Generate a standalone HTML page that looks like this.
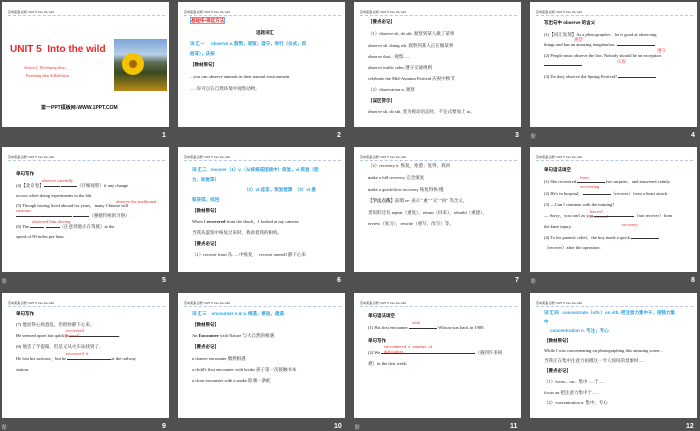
<!DOCTYPE html>
<html><head><meta charset="utf-8"><style>
*{margin:0;padding:0;box-sizing:border-box}
body{width:700px;height:431px;background:#505050;position:relative;overflow:hidden;font-family:"Liberation Serif","Noto Serif CJK SC",serif}
.s{position:absolute;width:167px;height:125px;background:#fff}
.h{position:absolute;left:6px;top:8px;font-size:3px;color:#333;font-family:"Liberation Sans","Noto Sans CJK SC",sans-serif;white-space:nowrap}
.d{position:absolute;left:6px;right:4px;top:13px;border-top:1px dashed #b8c8e0}
.t{position:absolute;font-size:4.5px;color:#222;white-space:nowrap;line-height:5px}
.b{font-weight:bold;font-family:"Liberation Sans","Noto Sans CJK SC",sans-serif;color:#111}
.c{color:#2aa0e0;font-weight:bold;font-family:"Liberation Sans","Noto Sans CJK SC",sans-serif}
.r{color:#e83030}
.n{position:absolute;color:#fff;font-size:7px;font-weight:bold;font-family:"Liberation Sans",sans-serif}
.m{position:absolute;color:#ddd;font-size:5px;font-family:"Noto Sans CJK SC",sans-serif}
.u{display:inline-block;border-bottom:0.6px solid #333;height:4px;vertical-align:baseline}
</style></head><body>

<!-- Slide 1 -->
<div class="s" style="left:2px;top:2px">
<div class="h">高中英语 必修 UNIT 5 Into the wild</div>
<div class="d"></div>
<div style="position:absolute;left:8px;top:42px;font:bold 10px 'Liberation Sans',sans-serif;color:#e82828;white-space:nowrap">UNIT 5&nbsp; Into the wild</div>
<div class="t r" style="left:22px;top:64px;font-size:3.6px">Section C&nbsp; Developing ideas ,</div>
<div class="t r" style="left:24px;top:72px;font-size:3.6px">Presenting ideas &amp; Reflection</div>
<div style="position:absolute;left:112px;top:37px;width:53px;height:52px;background:linear-gradient(#7aa4d8 0%,#b8cfe6 30%,#5d6e55 45%,#3a4a20 65%,#b88a18 100%)"><div style="position:absolute;left:8px;top:14px;width:22px;height:22px;border-radius:50%;background:#f5c400"></div><div style="position:absolute;left:15px;top:21px;width:8px;height:8px;border-radius:50%;background:#a06a00"></div></div>
<div class="t b" style="left:39px;top:104px;font-size:5px">第一PPT模板网-WWW.1PPT.COM</div>
</div>
<div class="n" style="left:162px;top:132px">1</div>

<!-- Slide 2 -->
<div class="s" style="left:178px;top:2px">
<div class="h">高中英语 必修 UNIT 5 Into the wild</div>
<div class="d"></div>
<div class="t c" style="left:12px;top:15px;color:#e02828;border:0.5px solid #6af;">基础练•梯度方法</div>
<div class="t b" style="left:78px;top:28px">话题词汇</div>
<div class="t c" style="left:12px;top:39px">词 汇一&nbsp;&nbsp;&nbsp;&nbsp; observe v. 群到，观察；遵守，举行（仪式，风</div>
<div class="t c" style="left:12px;top:49px">俗等），庆祝</div>
<div class="t b" style="left:12px;top:60px">【教材原句】</div>
<div class="t" style="left:12px;top:72px">...you can observe animals in their natural environment.</div>
<div class="t" style="left:12px;top:84px">......你可以在自然环境中观察动物。</div>
</div>
<div class="n" style="left:337px;top:132px">2</div>

<!-- Slide 3 -->
<div class="s" style="left:354px;top:2px">
<div class="h">高中英语 必修 UNIT 5 Into the wild</div>
<div class="d"></div>
<div class="t b" style="left:14px;top:17px">【要点必记】</div>
<div class="t" style="left:14px;top:29px">（1）observe sb. do sth. 观察到某人做了某事</div>
<div class="t" style="left:14px;top:41px">observe sb. doing sth. 观察到某人正在做某事</div>
<div class="t" style="left:14px;top:52px">observe that... 观察......</div>
<div class="t" style="left:14px;top:63px">observe traffic rules 遵守交通规则</div>
<div class="t" style="left:14px;top:74px">celebrate the Mid-Autumn Festival 庆祝中秋节</div>
<div class="t" style="left:14px;top:85px">（2）observation n. 观察</div>
<div class="t b" style="left:14px;top:96px">【误区警示】</div>
<div class="t" style="left:14px;top:107px">observe sb. do sth. 变为被动语态时，不定式要加上 to。</div>
</div>
<div class="n" style="left:515px;top:132px">3</div>
<div class="m" style="left:531px;top:133px">阶</div>

<!-- Slide 4 -->
<div class="s" style="left:530px;top:2px">
<div class="h">高中英语 必修 UNIT 5 Into the wild</div>
<div class="d"></div>
<div class="t b" style="left:14px;top:18px">写出句中 observe 的含义</div>
<div class="t" style="left:14px;top:30px">(1)【词汇复现】As a <i>photographer</i>，he is good at observing</div>
<div class="t" style="left:14px;top:40px">things and has an amazing <i>imagination</i>. <span class="u" style="width:38px"></span></div>
<div class="t r" style="left:44px;top:35px">观察</div>
<div class="t" style="left:14px;top:51px">(2) People must observe the law. Nobody should be an exception.</div>
<div class="t r" style="left:127px;top:46px">遵守</div>
<div class="t r" style="left:87px;top:57px">庆祝</div>
<div class="t" style="left:14px;top:60px"><span class="u" style="width:38px"></span></div>
<div class="t" style="left:14px;top:72px">(3) Do they observe the Spring Festival? <span class="u" style="width:38px"></span></div>
</div>
<div class="n" style="left:691px;top:132px">4</div>

<!-- Slide 5 -->
<div class="s" style="left:2px;top:147px">
<div class="h">高中英语 必修 UNIT 5 Into the wild</div>
<div class="d"></div>
<div class="t b" style="left:14px;top:24px">单句写作</div>
<div class="t" style="left:14px;top:36px">(4)【北京卷】<span class="u" style="width:16px"></span> <span class="u" style="width:16px"></span>（仔细观察）if any change</div>
<div class="t r" style="left:40px;top:31px">observe carefully</div>
<div class="t" style="left:14px;top:46px">occurs when doing experiments in the lab.</div>
<div class="t" style="left:14px;top:56px">(5) Though having lived abroad for years，many Chinese still</div>
<div class="t r" style="left:114px;top:52px">observe the traditional</div>
<div class="t r" style="left:14px;top:61px">customs</div>
<div class="t" style="left:14px;top:66px"><span class="u" style="width:56px"></span> <span class="u" style="width:16px"></span>（遵循传统的习俗）.</div>
<div class="t r" style="left:30px;top:72px">observed him driving</div>
<div class="t" style="left:14px;top:77px">(6) The <span class="u" style="width:14px"></span> <span class="u" style="width:14px"></span>（注意到他正在驾驶）at the</div>
<div class="t" style="left:14px;top:87px">speed of 90 miles per hour.</div>
</div>
<div class="n" style="left:162px;top:277px">5</div>
<div class="m" style="left:2px;top:278px">阶</div>

<!-- Slide 6 -->
<div class="s" style="left:178px;top:147px">
<div class="h">高中英语 必修 UNIT 5 Into the wild</div>
<div class="d"></div>
<div class="t c" style="left:14px;top:20px">词 汇二&nbsp;&nbsp; recover（1）v.（从疾病或困境中）恢复，vi.恢复（能</div>
<div class="t c" style="left:14px;top:30px">力、知觉等）</div>
<div class="t c" style="left:66px;top:40px">（2）vt.痊愈，恢复健康&nbsp;&nbsp;（3）vt.重</div>
<div class="t c" style="left:14px;top:50px">新获得，找回</div>
<div class="t b" style="left:14px;top:61px">【教材原句】</div>
<div class="t" style="left:14px;top:72px">When I <b>recovered</b> from the shock，I looked at my camera.</div>
<div class="t" style="left:14px;top:83px">当我从震惊中恢复过来时，我看着我的相机。</div>
<div class="t b" style="left:14px;top:94px">【要点必记】</div>
<div class="t" style="left:14px;top:105px">（1）recover from 从......中恢复&nbsp;&nbsp;&nbsp;&nbsp;&nbsp; recover oneself 静下心来</div>
</div>
<div class="n" style="left:337px;top:277px">6</div>

<!-- Slide 7 -->
<div class="s" style="left:354px;top:147px">
<div class="h">高中英语 必修 UNIT 5 Into the wild</div>
<div class="d"></div>
<div class="t" style="left:14px;top:16px">（2）recovery n. 恢复，痊愈；复得，找回</div>
<div class="t" style="left:14px;top:28px">make a full recovery 完全康复</div>
<div class="t" style="left:14px;top:40px">make a quick/slow recovery 恢复得快/慢</div>
<div class="t" style="left:14px;top:51px"><b>【学法点拨】</b>前缀 re- 表示 "重" "又" "再" 等含义。</div>
<div class="t" style="left:14px;top:63px">类似的还有 repeat（重复），return（回来），rebuild（重建），</div>
<div class="t" style="left:14px;top:74px">review（复习），rewrite（重写，改写）等。</div>
</div>
<div class="n" style="left:515px;top:277px">7</div>
<div class="m" style="left:531px;top:278px">阶</div>

<!-- Slide 8 -->
<div class="s" style="left:530px;top:147px">
<div class="h">高中英语 必修 UNIT 5 Into the wild</div>
<div class="d"></div>
<div class="t b" style="left:14px;top:20px">单句语法填空</div>
<div class="t" style="left:14px;top:32px">(1) She recovered <span class="u" style="width:28px"></span> her surprise，and answered calmly.</div>
<div class="t r" style="left:50px;top:28px">from</div>
<div class="t r" style="left:50px;top:37px">recovering</div>
<div class="t" style="left:14px;top:44px">(2) He's in hospital，<span class="u" style="width:28px"></span>（recover）from a heart attack.</div>
<div class="t" style="left:14px;top:55px">(3) —Can I continue with the training?</div>
<div class="t r" style="left:60px;top:62px">haven't<br>recovered</div>
<div class="t" style="left:14px;top:66px">— Sorry，you can't as you <span class="u" style="width:40px"></span>（not recover）from</div>
<div class="t r" style="left:92px;top:75px">recovery</div>
<div class="t" style="left:14px;top:77px">the knee injury.</div>
<div class="t" style="left:14px;top:88px">(4) To his parents' relief，the boy made a quick <span class="u" style="width:28px"></span></div>
<div class="t" style="left:14px;top:98px">（recover）after the operation.</div>
</div>
<div class="n" style="left:691px;top:277px">8</div>

<!-- Slide 9 -->
<div class="s" style="left:2px;top:293px">
<div class="h">高中英语 必修 UNIT 5 Into the wild</div>
<div class="d"></div>
<div class="t b" style="left:14px;top:18px">单句写作</div>
<div class="t" style="left:14px;top:29px">(7) 他显得心烦意乱，但很快静下心来。</div>
<div class="t" style="left:14px;top:40px">He seemed upset but quickly <span class="u" style="width:50px"></span>.</div>
<div class="t r" style="left:64px;top:35px">recovered<br>himself</div>
<div class="t" style="left:14px;top:51px">(8) 他丢了手提箱，但是又从火车站找到了。</div>
<div class="t r" style="left:64px;top:58px">recovered&nbsp; it</div>
<div class="t" style="left:14px;top:63px">He lost his suitcase，but he <span class="u" style="width:44px"></span>at the railway</div>
<div class="t" style="left:14px;top:74px">station.</div>
</div>
<div class="n" style="left:162px;top:423px">9</div>
<div class="m" style="left:2px;top:424px">阶</div>

<!-- Slide 10 -->
<div class="s" style="left:178px;top:293px">
<div class="h">高中英语 必修 UNIT 5 Into the wild</div>
<div class="d"></div>
<div class="t c" style="left:14px;top:18px">词 汇三&nbsp;&nbsp;&nbsp; encounter n.&amp; v. 相遇，邂逅，遭遇</div>
<div class="t b" style="left:14px;top:29px">【教材原句】</div>
<div class="t" style="left:14px;top:40px">An <b>Encounter</b> with Nature 与大自然的相遇</div>
<div class="t b" style="left:14px;top:51px">【要点必记】</div>
<div class="t" style="left:14px;top:63px">a chance encounter 偶然相遇</div>
<div class="t" style="left:14px;top:74px">a child's first encounter with books 孩子第一次接触书本</div>
<div class="t" style="left:14px;top:85px">a close encounter with a snake 险遇一条蛇</div>
</div>
<div class="n" style="left:334px;top:423px">10</div>

<!-- Slide 11 -->
<div class="s" style="left:354px;top:293px">
<div class="h">高中英语 必修 UNIT 5 Into the wild</div>
<div class="d"></div>
<div class="t b" style="left:14px;top:20px">单句语法填空</div>
<div class="t" style="left:14px;top:32px">(1) His first encounter <span class="u" style="width:28px"></span> Wilson was back in 1989.</div>
<div class="t r" style="left:58px;top:27px">with</div>
<div class="t b" style="left:14px;top:45px">单句写作</div>
<div class="t r" style="left:30px;top:51px">encountered&nbsp; a&nbsp; number&nbsp; of<br>difficulties</div>
<div class="t" style="left:14px;top:57px">(2) We <span class="u" style="width:94px"></span>（遇到许多困</div>
<div class="t" style="left:14px;top:68px">难）in the first week.</div>
</div>
<div class="n" style="left:510px;top:423px">11</div>
<div class="m" style="left:355px;top:424px">阶</div>

<!-- Slide 12 -->
<div class="s" style="left:530px;top:293px">
<div class="h">高中英语 必修 UNIT 5 Into the wild</div>
<div class="d"></div>
<div class="t c" style="left:14px;top:17px">词 汇四&nbsp;&nbsp; concentrate（sth.）on sth. 把注意力集中于，使精力集</div>
<div class="t c" style="left:14px;top:26px">中</div>
<div class="t c" style="left:20px;top:35px">concentration n. 专注，专心</div>
<div class="t b" style="left:14px;top:45px">【教材原句】</div>
<div class="t" style="left:14px;top:55px">While I was concentrating on photographing this amazing scene...</div>
<div class="t" style="left:14px;top:65px">当我正在集中注意力拍摄这一令人惊叹的景象时......</div>
<div class="t b" style="left:14px;top:75px">【要点必记】</div>
<div class="t" style="left:14px;top:86px">（1）focus... on... 集中......于......</div>
<div class="t" style="left:14px;top:97px">focus on 把注意力集中于......</div>
<div class="t" style="left:14px;top:107px">（2）concentration n. 集中；专心</div>
</div>
<div class="n" style="left:686px;top:423px">12</div>
</body></html>
